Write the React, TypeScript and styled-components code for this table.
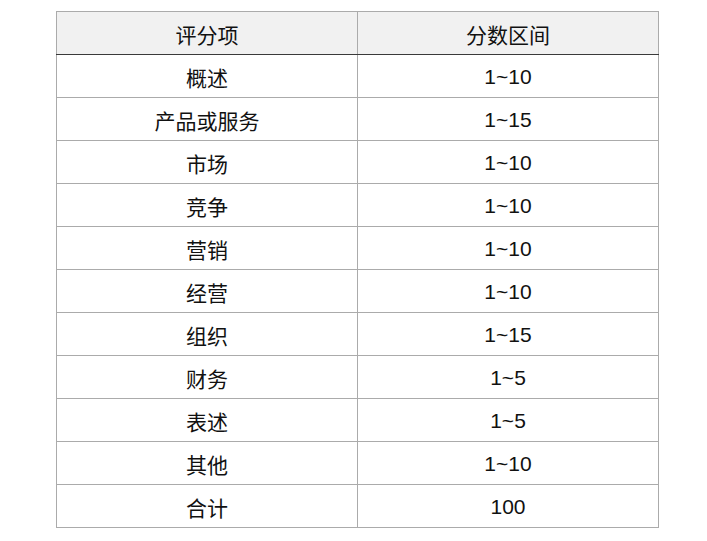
import React from 'react';
import styled, { createGlobalStyle } from 'styled-components';

const GlobalStyle = createGlobalStyle`
  body {
    margin: 0;
    background: #ffffff;
    font-family: "Liberation Sans", "Noto Sans CJK SC", sans-serif;
  }
`;

const Page = styled.div`
  padding: 11px 0 0 56px;
`;

const Table = styled.table`
  width: 603px;
  border-collapse: collapse;
  table-layout: fixed;
  border: 1px solid #ababab;
  color: #111111;
  font-size: 21px;
`;

const HeadCell = styled.th`
  height: 41px;
  padding: 1px 0 0;
  font-weight: normal;
  text-align: center;
  background: #f1f1f1;
  border: 1px solid #ababab;
  border-bottom: 1px solid #3a3a3a;
`;

const Cell = styled.td`
  height: 41px;
  padding: 1px 0 0;
  text-align: center;
  border: 1px solid #ababab;
`;

const rows: [string, string][] = [
  ['概述', '1~10'],
  ['产品或服务', '1~15'],
  ['市场', '1~10'],
  ['竞争', '1~10'],
  ['营销', '1~10'],
  ['经营', '1~10'],
  ['组织', '1~15'],
  ['财务', '1~5'],
  ['表述', '1~5'],
  ['其他', '1~10'],
  ['合计', '100'],
];

const App = () => {
  return (
    <>
      <GlobalStyle />
      <Page>
        <Table>
          <thead>
            <tr>
              <HeadCell>评分项</HeadCell>
              <HeadCell>分数区间</HeadCell>
            </tr>
          </thead>
          <tbody>
            {rows.map(([item, range]) => (
              <tr key={item}>
                <Cell>{item}</Cell>
                <Cell>{range}</Cell>
              </tr>
            ))}
          </tbody>
        </Table>
      </Page>
    </>
  );
};

export default App;
